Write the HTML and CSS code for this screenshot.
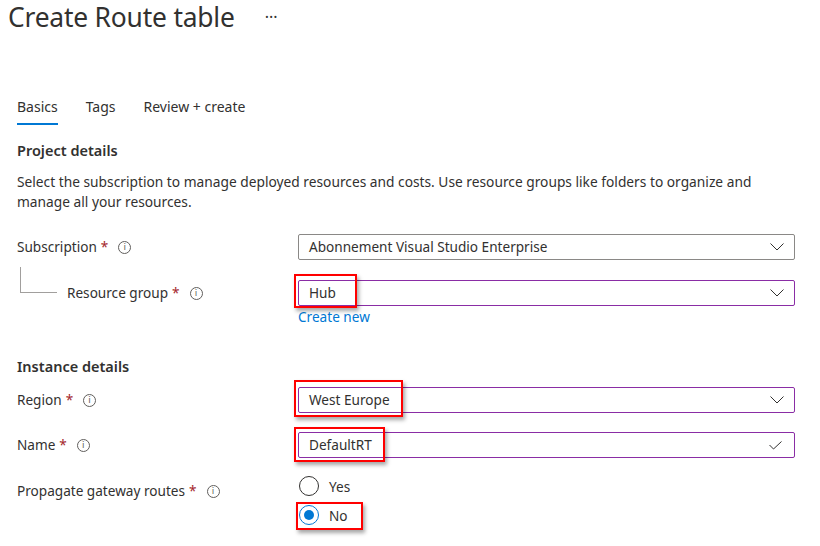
FILE: index.html
```html
<!DOCTYPE html>
<html>
<head>
<meta charset="utf-8">
<link rel="stylesheet" href="styles.css">
</head>
<body>
<div class="page">
  <header class="title-bar">
    <h1 class="title">Create Route table</h1>
    <span class="more">···</span>
  </header>

  <nav class="tabs">
    <span class="tab active">Basics</span>
    <span class="tab">Tags</span>
    <span class="tab">Review + create</span>
  </nav>

  <section class="content">
    <h2 class="section-title">Project details</h2>
    <p class="desc">Select the subscription to manage deployed resources and costs. Use resource groups like folders to organize and manage all your resources.</p>

    <div class="field sub-field">
      <div class="label">Subscription <span class="req">*</span> <span class="info">i</span></div>
      <div class="control">
        <div class="select">
          <span class="value">Abonnement Visual Studio Enterprise</span>
          <svg class="chev" width="14" height="8" viewBox="0 0 14 8"><polyline points="0.5,0.5 7,7 13.5,0.5" fill="none" stroke="#323130" stroke-width="1"/></svg>
        </div>
      </div>
    </div>

    <div class="field rg-field">
      <div class="label nested"><span class="tree"></span>Resource group <span class="req">*</span> <span class="info">i</span></div>
      <div class="control">
        <div class="select focus">
          <span class="value">Hub</span>
          <svg class="chev" width="14" height="8" viewBox="0 0 14 8"><polyline points="0.5,0.5 7,7 13.5,0.5" fill="none" stroke="#323130" stroke-width="1"/></svg>
        </div>
        <span class="mark mark-hub"></span>
        <a class="link">Create new</a>
      </div>
    </div>

    <h2 class="section-title instance">Instance details</h2>

    <div class="field region-field">
      <div class="label">Region <span class="req">*</span> <span class="info">i</span></div>
      <div class="control">
        <div class="select focus">
          <span class="value">West Europe</span>
          <svg class="chev" width="14" height="8" viewBox="0 0 14 8"><polyline points="0.5,0.5 7,7 13.5,0.5" fill="none" stroke="#323130" stroke-width="1"/></svg>
        </div>
        <span class="mark mark-region"></span>
      </div>
    </div>

    <div class="field name-field">
      <div class="label">Name <span class="req">*</span> <span class="info">i</span></div>
      <div class="control">
        <div class="select focus">
          <span class="value">DefaultRT</span>
          <svg class="check" width="13" height="9" viewBox="0 0 13 9"><polyline points="0.5,4 4.5,8 12.5,0.5" fill="none" stroke="#323130" stroke-width="1"/></svg>
        </div>
        <span class="mark mark-name"></span>
      </div>
    </div>

    <div class="field radio-field">
      <div class="label">Propagate gateway routes <span class="req">*</span> <span class="info">i</span></div>
      <div class="control radios">
        <div class="radio-row"><span class="radio"></span><span>Yes</span></div>
        <div class="radio-row no"><span class="radio checked"></span><span>No</span><span class="mark mark-no"></span></div>
      </div>
    </div>
  </section>
</div>
</body>
</html>
```

FILE: styles.css
```css
* { box-sizing: border-box; }
html, body { margin: 0; padding: 0; background: #fff; }
body {
  font-family: "Noto Sans", "Open Sans", "Liberation Sans", sans-serif;
  color: #323130;
  font-size: 14px;
  width: 820px;
  height: 546px;
  overflow: hidden;
}
.page { position: relative; }

.title-bar {
  display: flex;
  align-items: center;
  height: 34px;
  padding-left: 8px;
}
.title {
  margin: 0;
  font-size: 26.4px;
  font-weight: 400;
  line-height: 34px;
  color: #323130;
  letter-spacing: -0.2px;
}
.more {
  margin-left: 30px;
  font-size: 16px;
  color: #323130;
  line-height: 34px;
  letter-spacing: 0px;
}

.tabs {
  display: flex;
  margin-top: 63px;
  padding-left: 17px;
  gap: 28px;
}
.tab {
  font-size: 14px;
  line-height: 20px;
  padding-bottom: 6px;
  border-bottom: 2px solid transparent;
}
.tab.active { border-bottom-color: #0078d4; }

.content { padding-left: 17px; }
.section-title {
  margin: 15px 0 0;
  font-size: 14.5px;
  font-weight: 600;
  line-height: 20px;
}
.desc {
  margin: 12px 0 0;
  width: 770px;
  font-size: 13.75px;
  line-height: 20px;
}

.field {
  display: grid;
  grid-template-columns: 281px 497px;
  align-items: center;
}
.sub-field { margin-top: 22px; }
.rg-field { margin-top: 20px; align-items: start; }
.rg-field .label { margin-top: 3px; }
.region-field { margin-top: 11px; }
.name-field { margin-top: 19px; }
.radio-field { margin-top: 18px; align-items: start; }
.radio-field .label { margin-top: 5px; }

.label {
  font-size: 13.6px;
  line-height: 20px;
  display: flex;
  align-items: center;
  white-space: nowrap;
}
.req { color: #a4262c; margin-left: 4px; }
.info {
  display: inline-flex;
  align-items: center;
  justify-content: center;
  width: 13px;
  height: 13px;
  border: 1px solid #605e5c;
  border-radius: 50%;
  font-size: 9px;
  line-height: 1;
  color: #605e5c;
  margin-left: 10px;
  font-family: "DejaVu Sans", sans-serif;
}
.nested { position: relative; padding-left: 50px; }
.tree {
  position: absolute;
  left: 3px;
  top: -16px;
  width: 37px;
  height: 26px;
  border-left: 1px solid #a19f9d;
  border-bottom: 1px solid #a19f9d;
}

.control { position: relative; }
.select {
  position: relative;
  display: flex;
  align-items: center;
  height: 26px;
  border: 1px solid #8a8886;
  border-radius: 2px;
  padding: 0 10px 0 10px;
  font-size: 13.6px;
}
.select.focus { border-color: #8a2da5; }
.value { flex: 1; line-height: 20px; }
.check { margin-right: 2px; }

.link {
  display: block;
  color: #0078d4;
  font-size: 13.6px;
  line-height: 18px;
  margin-top: 2px;
}

.instance { margin-top: 30px; }

.mark {
  position: absolute;
  border: 2px solid #f00;
  box-shadow: 2px 3px 4px rgba(0,0,0,0.35);
  pointer-events: none;
}
.mark-hub { left: -4px; top: -6px; width: 63px; height: 34px; }
.mark-region { left: -4px; top: -7px; width: 109px; height: 37px; }
.mark-name { left: -4px; top: -5px; width: 91px; height: 35px; }

.radios { display: flex; flex-direction: column; gap: 9px; }
.radio-row {
  position: relative;
  display: flex;
  align-items: center;
  gap: 10px;
  height: 20px;
  font-size: 13.6px;
}
.radio {
  width: 20px;
  height: 20px;
  margin-left: 1px;
  border: 1px solid #323130;
  border-radius: 50%;
  position: relative;
}
.radio.checked { border-color: #0078d4; }
.radio.checked::after {
  content: "";
  position: absolute;
  left: 4px;
  top: 4px;
  width: 10px;
  height: 10px;
  border-radius: 50%;
  background: #0078d4;
}
.mark-no { left: -2px; top: -3px; width: 67px; height: 28px; }
```
